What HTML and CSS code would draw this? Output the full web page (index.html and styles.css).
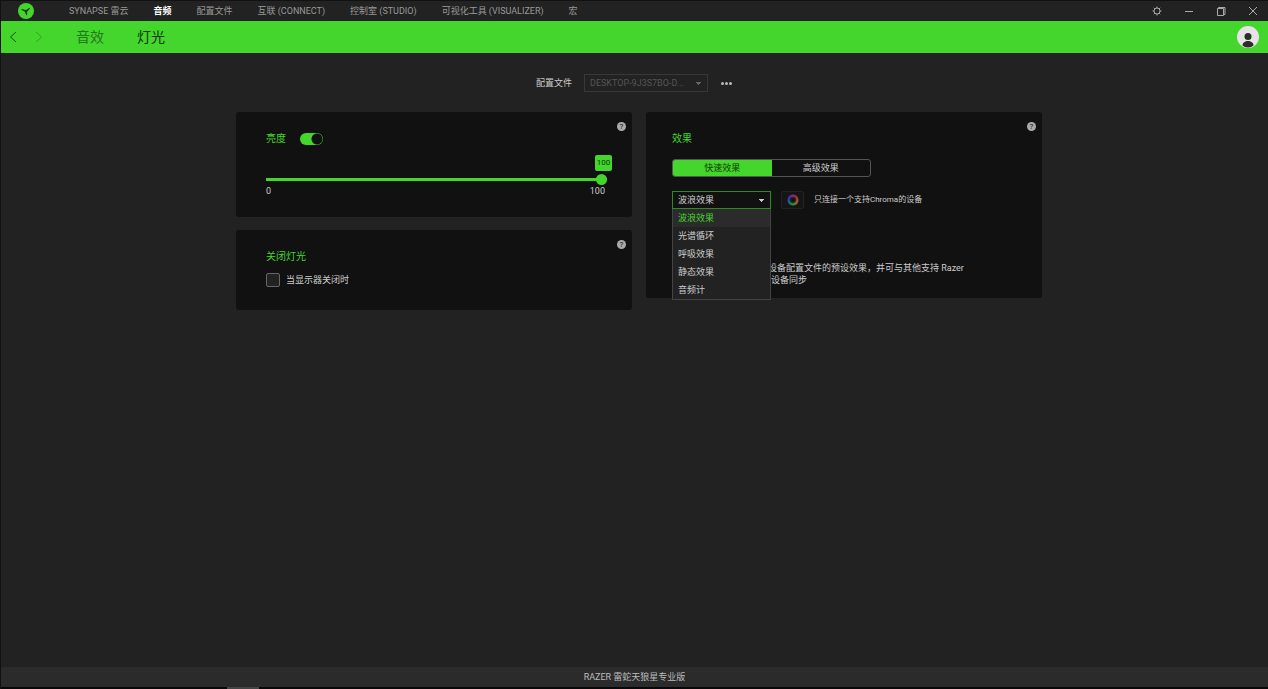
FILE: index.html
```html
<!DOCTYPE html>
<html lang="zh-CN">
<head>
<meta charset="utf-8">
<title>Razer Synapse</title>
<link rel="stylesheet" href="styles.css">
</head>
<body>
<header class="titlebar">
  <svg class="logo" viewBox="0 0 16 16" aria-hidden="true">
    <circle cx="8" cy="8" r="8" fill="#44d62c"/>
    <path d="M3 6.500C5 6 6 7 7.500 7c1.800 0 2.500-1.800 4.700-2.200C12 6.500 10 7.500 9.300 8.500c-.6 1 .2 2.500-.3 4-1.600-.8-1.300-2.500-2-3.500C6 7.800 4.500 8 3 6.500z" fill="#153a0e"/>
  </svg>
  <nav class="menu">
    <a href="#synapse">SYNAPSE 雷云</a>
    <a href="#audio" class="active">音频</a>
    <a href="#profiles">配置文件</a>
    <a href="#connect">互联 (CONNECT)</a>
    <a href="#studio">控制室 (STUDIO)</a>
    <a href="#visualizer">可视化工具 (VISUALIZER)</a>
    <a href="#macro">宏</a>
  </nav>
  <div class="window-buttons">
    <button type="button" aria-label="设置"><svg viewBox="0 0 10 10"><circle cx="5" cy="5" r="3"/><path d="M5 .5V2M5 8v1.500M.5 5H2M8 5h1.500M1.800 1.800l1.100 1.100M7.100 7.100l1.100 1.100M8.200 1.800 7.100 2.900M2.900 7.100 1.800 8.200"/></svg></button>
    <button type="button" aria-label="最小化"><svg viewBox="0 0 10 10"><path d="M1 5.500h8"/></svg></button>
    <button type="button" aria-label="还原"><svg viewBox="0 0 10 10"><path d="M1.500 2.500h6v7h-6zM2.500 2.500v-1h6.500v7H7.500"/></svg></button>
    <button type="button" aria-label="关闭"><svg viewBox="0 0 10 10"><path d="M1 1l8 8M9 1 1 9"/></svg></button>
  </div>
</header>
<div class="toolbar">
  <button type="button" class="arrow" aria-label="后退"><svg viewBox="0 0 8 12"><path d="M7 1 1.500 6 7 11"/></svg></button>
  <button type="button" class="arrow dim" aria-label="前进"><svg viewBox="0 0 8 12"><path d="M1 1l5.500 5L1 11"/></svg></button>
  <nav class="tabs">
    <a href="#sound">音效</a>
    <a href="#lighting" class="active">灯光</a>
  </nav>
  <button type="button" class="avatar" aria-label="账户">
    <svg viewBox="0 0 22 22"><circle cx="11" cy="11" r="11" fill="#e4e4e4"/><circle cx="11" cy="10.500" r="3.500" fill="#2b2b2b"/><path d="M5.500 19.500c0-6 11-6 11 0-3 2.500-8 2.500-11 0z" fill="#2b2b2b"/></svg>
  </button>
</div>
<main class="content">
  <div class="profile">
    <label for="profile">配置文件</label>
    <select id="profile" class="select" disabled><option>DESKTOP-9J3S7BO-D...</option></select>
    <button type="button" class="more" aria-label="更多"><i></i><i></i><i></i></button>
  </div>
  <div class="columns">
    <div class="column">
      <section class="card inset">
        <button type="button" class="help" aria-label="帮助">?</button>
        <div class="heading">
          <h2>亮度</h2>
          <input type="checkbox" class="switch" aria-label="亮度开关" checked>
        </div>
        <div class="slider">
          <output class="bubble" for="level">100</output>
          <input type="range" id="level" aria-label="亮度" min="0" max="100" value="100">
          <div class="scale"><span>0</span><span>100</span></div>
        </div>
      </section>
      <section class="card inset off">
        <button type="button" class="help" aria-label="帮助">?</button>
        <h2>关闭灯光</h2>
        <label class="check"><input type="checkbox">当显示器关闭时</label>
      </section>
    </div>
    <div class="column">
      <section class="card effects">
        <button type="button" class="help" aria-label="帮助">?</button>
        <h2>效果</h2>
        <div class="segments">
          <button type="button" class="on">快速效果</button>
          <button type="button">高级效果</button>
        </div>
        <div class="effect-row">
          <div class="combo">
            <select class="select open" aria-label="效果"><option>波浪效果</option></select>
            <ul class="options">
              <li class="selected">波浪效果</li>
              <li>光谱循环</li>
              <li>呼吸效果</li>
              <li>静态效果</li>
              <li>音频计</li>
            </ul>
          </div>
          <button type="button" class="chroma" aria-label="Chroma"><span></span></button>
          <span class="note">只连接一个支持Chroma的设备</span>
        </div>
        <p class="description">设备配置文件的预设效果，并可与其他支持 Razer<br>设备同步</p>
      </section>
    </div>
  </div>
</main>
<footer class="device">RAZER 雷蛇天狼星专业版</footer>
<div class="edge"></div>
</body>
</html>
```
FILE: styles.css
```css
* { box-sizing: border-box; }
body {
  margin: 0;
  min-height: 100vh;
  display: flex;
  flex-direction: column;
  background: #222;
  border-left: 1px solid #111;
  color: #ccc;
  font: 9px/12px Roboto, "Noto Sans CJK SC", sans-serif;
}
a { color: inherit; text-decoration: none; }
button, select, input { font: inherit; color: inherit; margin: 0; }
button { padding: 0; border: 0; background: none; }
svg { display: block; }
h2 { margin: 0; font-size: 10px; line-height: 14px; font-weight: 400; color: #44d62c; }

.titlebar { display: flex; align-items: center; height: 21px; padding: 0 10px 0 17px; border-top: 1px solid #111; }
.logo { width: 16px; height: 16px; }
.menu { display: flex; gap: 25px; margin-left: 35px; color: #999; white-space: nowrap; }
.menu .active { color: #fff; font-weight: 700; }
.window-buttons { display: flex; gap: 22px; margin-left: auto; }
.window-buttons svg { width: 10px; height: 10px; fill: none; stroke: #aaa; stroke-width: 1; }

.toolbar { display: flex; align-items: center; height: 32px; padding: 0 9px 0 8px; background: #44d62c; }
.arrow svg { width: 8px; height: 12px; fill: none; stroke: #164b0e; stroke-width: 1; }
.arrow.dim { margin-left: 18px; opacity: 0.35; }
.tabs { display: flex; gap: 33px; margin-left: 33px; font-size: 14px; line-height: 20px; color: #23781a; }
.tabs .active { color: #0f3509; }
.avatar { margin-left: auto; }
.avatar svg { width: 22px; height: 22px; }

.content { flex: 1; padding: 21px 10px 0; }
.profile { display: flex; justify-content: center; align-items: center; height: 18px; padding-right: 1px; }
.select {
  width: 100%;
  height: 18px;
  padding: 0 20px 0 5px;
  border: 1px solid #383838;
  border-radius: 0;
  appearance: none;
  background: conic-gradient(from -45deg at 50% 100%, #ccc 90deg, transparent 0) right 6px center / 6px 3px no-repeat;
  color: #ccc;
  outline: 0;
}
.profile .select {
  width: 124px;
  margin: 0 13px 0 12px;
  background-image: conic-gradient(from -45deg at 50% 100%, #666 90deg, transparent 0);
  color: #555;
  opacity: 1;
}
.more { display: flex; gap: 1px; }
.more i { width: 3px; height: 3px; border-radius: 50%; background: #bbb; }

.columns { display: flex; justify-content: center; align-items: flex-start; gap: 14px; margin-top: 20px; padding-left: 9px; }
.column { flex: 0 1 396px; display: flex; flex-direction: column; gap: 13px; }
.card { position: relative; padding: 20px 26px; border-radius: 3px; background: #111; }
.card.inset { padding-left: 30px; padding-right: 25px; }
.card.off { padding-bottom: 23px; }
.help { position: absolute; top: 10px; right: 6px; width: 9px; height: 9px; border-radius: 50%; background: #aaa; color: #111; font-size: 8px; line-height: 9px; }

.heading { display: flex; align-items: center; gap: 14px; }
.switch { appearance: none; width: 23px; height: 12px; border-radius: 6px; background: radial-gradient(circle at 17px 6px, #111 5px, #44d62c 6px); }
.slider { margin-top: 9px; }
.bubble { display: block; width: 17px; height: 16px; margin-left: auto; margin-right: -5px; border-radius: 2px; background: #44d62c; color: #0f3509; line-height: 16px; text-align: center; font-size: 8px; }
.slider input { display: block; appearance: none; width: 100%; height: 11px; margin-top: 3px; background: linear-gradient(#44d62c, #44d62c) center / 100% 3px no-repeat; }
.slider input::-webkit-slider-thumb { appearance: none; width: 11px; height: 11px; border-radius: 50%; background: #44d62c; }
.scale { display: flex; justify-content: space-between; padding-right: 2px; }
.check { display: flex; align-items: center; gap: 6px; margin-top: 9px; height: 14px; }
.check input { appearance: none; width: 14px; height: 14px; border: 1px solid #666; border-radius: 2px; background: #222; }

.segments { display: flex; width: 199px; height: 18px; margin-top: 13px; border: 1px solid #555; border-radius: 3px; overflow: hidden; }
.segments button { flex: 1; }
.segments .on { background: #44d62c; color: #103c0a; }
.effect-row { display: flex; align-items: center; margin-top: 14px; }
.combo { position: relative; width: 99px; }
.select.open { display: block; border-color: #2d8a1f; }
.options { position: absolute; z-index: 1; top: 18px; left: 0; width: 100%; margin: 0; padding: 0; border: 1px solid #444; border-top: 0; list-style: none; background: #222; }
.options li { padding-left: 5px; line-height: 18px; }
.options .selected { background: #2b2b2b; color: #44d62c; }
.chroma { display: grid; place-items: center; width: 23px; height: 18px; margin: 0 10px; border: 1px solid #222; border-radius: 2px; background: #151515; }
.chroma span { width: 12px; height: 12px; border-radius: 50%; background: radial-gradient(#151515 2px, transparent 4px, transparent 5px, #151515 6px), conic-gradient(#8a2a88, #a82c44, #a0641c, #62881e, #1c8848, #1e58a0, #40309a, #8a2a88); }
.note { font-size: 8px; }
.description { margin: 53px 0 0 99px; text-indent: -3px; white-space: nowrap; }
.effects { padding-bottom: 12px; }

.device { height: 20px; background: #2b2b2b; line-height: 20px; text-align: center; color: #bbb; }
.edge { height: 2px; background: linear-gradient(#444, #444) 226px 0 / 32px 100% no-repeat #080808; }
```
